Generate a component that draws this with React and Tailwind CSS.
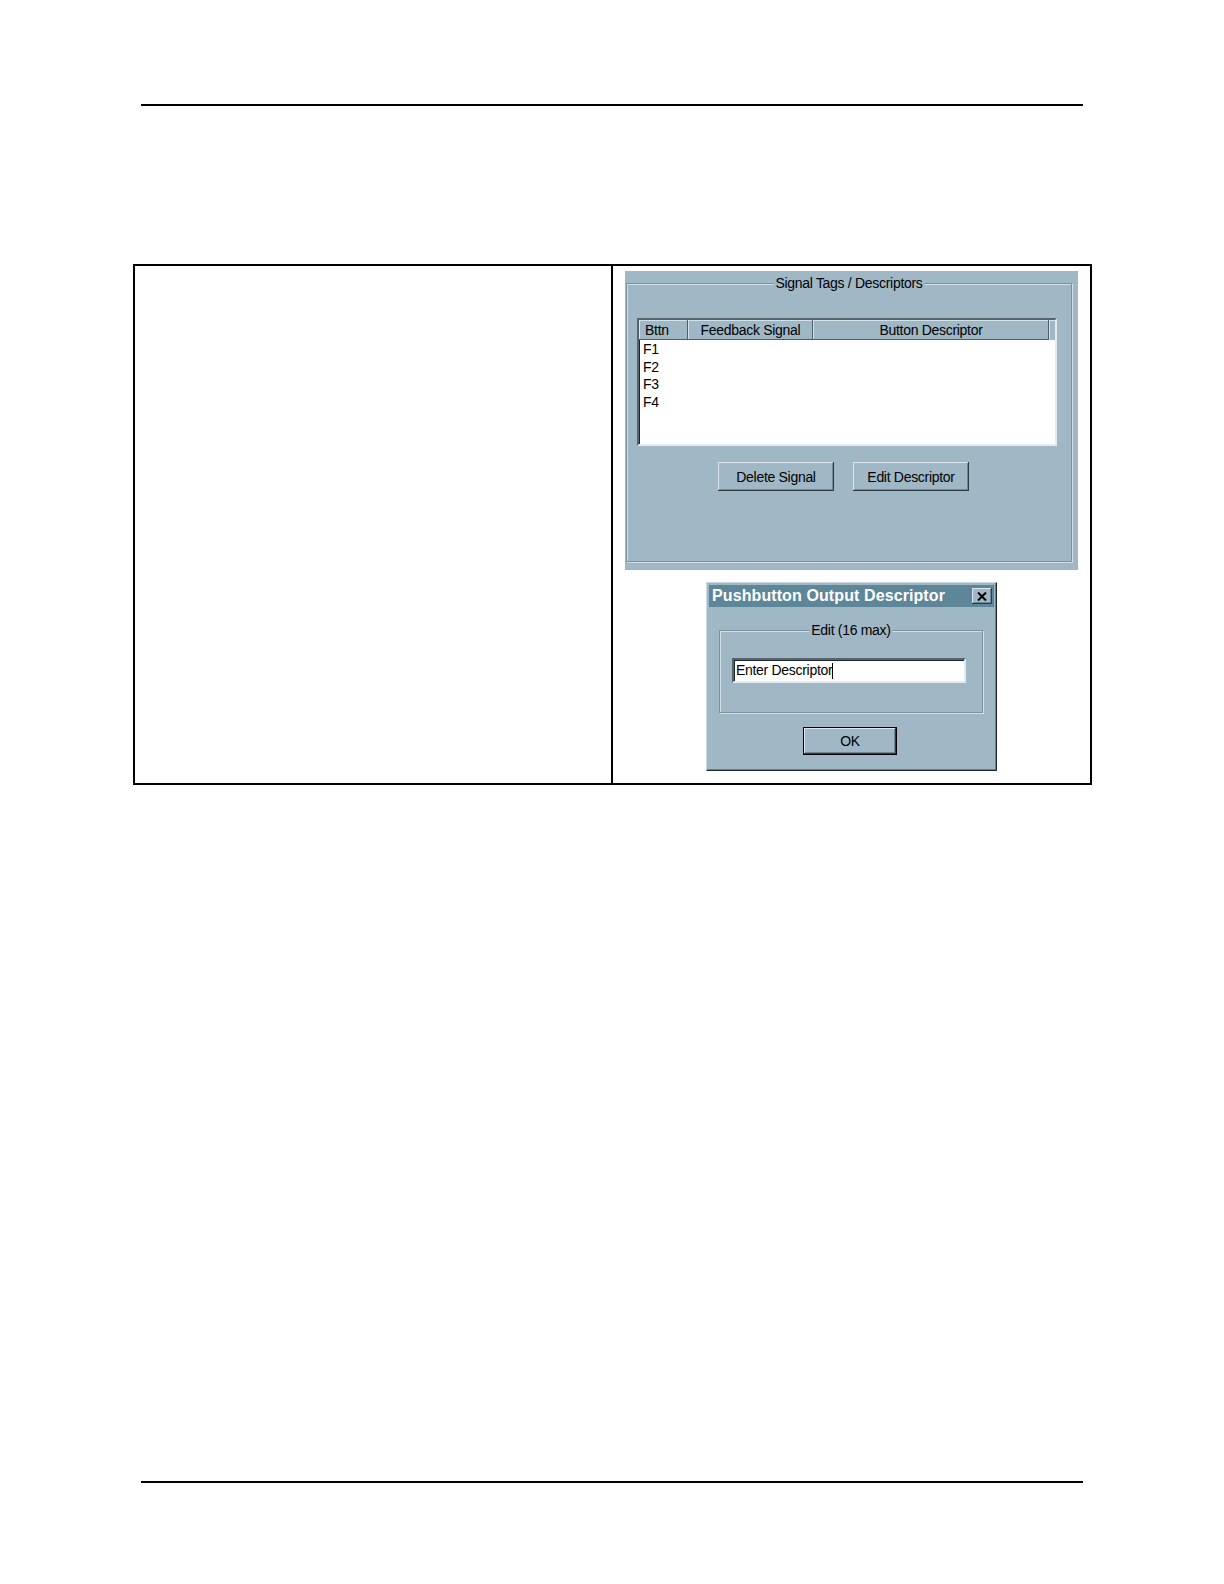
import React from 'react';

// raised / sunken bevels used by the old Windows style widgets
const raised =
  'shadow-[inset_-1px_-1px_0_#2f3b42,inset_1px_1px_0_#dce6ec,inset_-2px_-2px_0_#71889a]';
const sunken =
  'border-2 border-t-[#55646d] border-l-[#55646d] border-b-[#e3ebef] border-r-[#e3ebef] shadow-[inset_1px_1px_0_#1d252a]';

const GroupBox = ({ label, className, children }) => (
  <div
    className={`relative border border-[#7b919e] shadow-[inset_1px_1px_0_#d3dfe6,1px_1px_0_#d3dfe6] ${className}`}
  >
    <span className="absolute left-1/2 -translate-x-1/2 -top-[9px] px-[2px] bg-[#a0b8c6] leading-[17px] whitespace-nowrap">
      {label}
    </span>
    {children}
  </div>
);

const WinButton = ({ label, className }) => (
  <button className={`bg-[#a0b8c6] text-black leading-[20px] ${raised} ${className}`}>
    {label}
  </button>
);

const SignalPanel = () => {
  const columns = [
    { name: 'Bttn', width: 'w-[49px] text-left pl-[6px]' },
    { name: 'Feedback Signal', width: 'w-[125px] text-center' },
    { name: 'Button Descriptor', width: 'w-[236px] text-center' },
  ];
  const rows = ['F1', 'F2', 'F3', 'F4'];

  return (
    <div className="w-[453px] h-[299px] bg-[#a0b8c6] ml-[12px] pt-[12px]">
      <GroupBox label="Signal Tags / Descriptors" className="ml-[1px] w-[446px] h-[279px]">
        {/* list view */}
        <div className={`ml-[10px] mt-[34px] w-[420px] h-[128px] bg-white ${sunken}`}>
          <div className="flex h-[20px] bg-[#a0b8c6]">
            {columns.map((col) => (
              <div
                key={col.name}
                className={`${col.width} leading-[20px] shadow-[inset_-1px_-1px_0_#4f5f68,inset_1px_1px_0_#d6e2e9]`}
              >
                {col.name}
              </div>
            ))}
            <div className="flex-1 shadow-[inset_1px_1px_0_#d6e2e9]" />
          </div>
          <div className="pt-[1px] pl-[4px]">
            {rows.map((r) => (
              <div key={r} className="leading-[17.5px]">
                {r}
              </div>
            ))}
          </div>
        </div>
        <div className="flex gap-[19px] ml-[91px] mt-[16px]">
          <WinButton label="Delete Signal" className="w-[116px] h-[29px]" />
          <WinButton label="Edit Descriptor" className="w-[116px] h-[29px]" />
        </div>
      </GroupBox>
    </div>
  );
};

const DescriptorDialog = () => (
  <div className="self-center mt-[12px] w-[291px] h-[189px] bg-[#a0b8c6] border border-t-[#cbd9e1] border-l-[#cbd9e1] border-b-[#1f282d] border-r-[#1f282d] shadow-[inset_-1px_-1px_0_#6b808c] p-[2px] flex flex-col">
    {/* title bar */}
    <div className="h-[22px] bg-[#5e8699] flex items-center justify-between pl-[3px] pr-[2px]">
      <span className="text-white font-bold text-[16px] leading-[22px] tracking-[0.1px]">
        Pushbutton Output Descriptor
      </span>
      <span className={`w-[20px] h-[16px] bg-[#a0b8c6] flex items-center justify-center ${raised}`}>
        <svg width="10" height="9" viewBox="0 0 10 9">
          <path d="M1 0.5 L9 8.5 M9 0.5 L1 8.5" stroke="#000" strokeWidth="2" />
        </svg>
      </span>
    </div>

    <GroupBox label="Edit (16 max)" className="ml-[10px] mt-[23px] w-[264px] h-[83px]">
      <div className={`ml-[12px] mt-[27px] w-[234px] h-[25px] bg-white flex items-center pl-[2px] ${sunken}`}>
        <span className="leading-[21px]">Enter Descriptor</span>
        <span className="inline-block w-px h-[16px] bg-black" />
      </div>
    </GroupBox>

    <button
      className={`ml-[94px] mt-[14px] w-[94px] h-[28px] bg-[#a0b8c6] border border-black leading-[20px] ${raised}`}
    >
      OK
    </button>
  </div>
);

export default function App() {
  return (
    <div
      className="w-[1224px] h-[1584px] bg-white pt-[104px] text-[14px] tracking-[-0.3px] text-black"
      style={{ fontFamily: '"Liberation Sans", Arial, sans-serif' }}
    >
      <div className="ml-[141px] w-[942px] h-[2px] bg-black" />

      <div className="ml-[133px] mt-[158px] w-[959px] h-[521px] border-2 border-black flex">
        <div className="w-[478px] border-r-2 border-black" />
        <div className="flex-1 flex flex-col items-start pt-[5px]">
          <SignalPanel />
          <DescriptorDialog />
        </div>
      </div>

      <div className="ml-[141px] mt-[696px] w-[942px] h-[2px] bg-black" />
    </div>
  );
}
